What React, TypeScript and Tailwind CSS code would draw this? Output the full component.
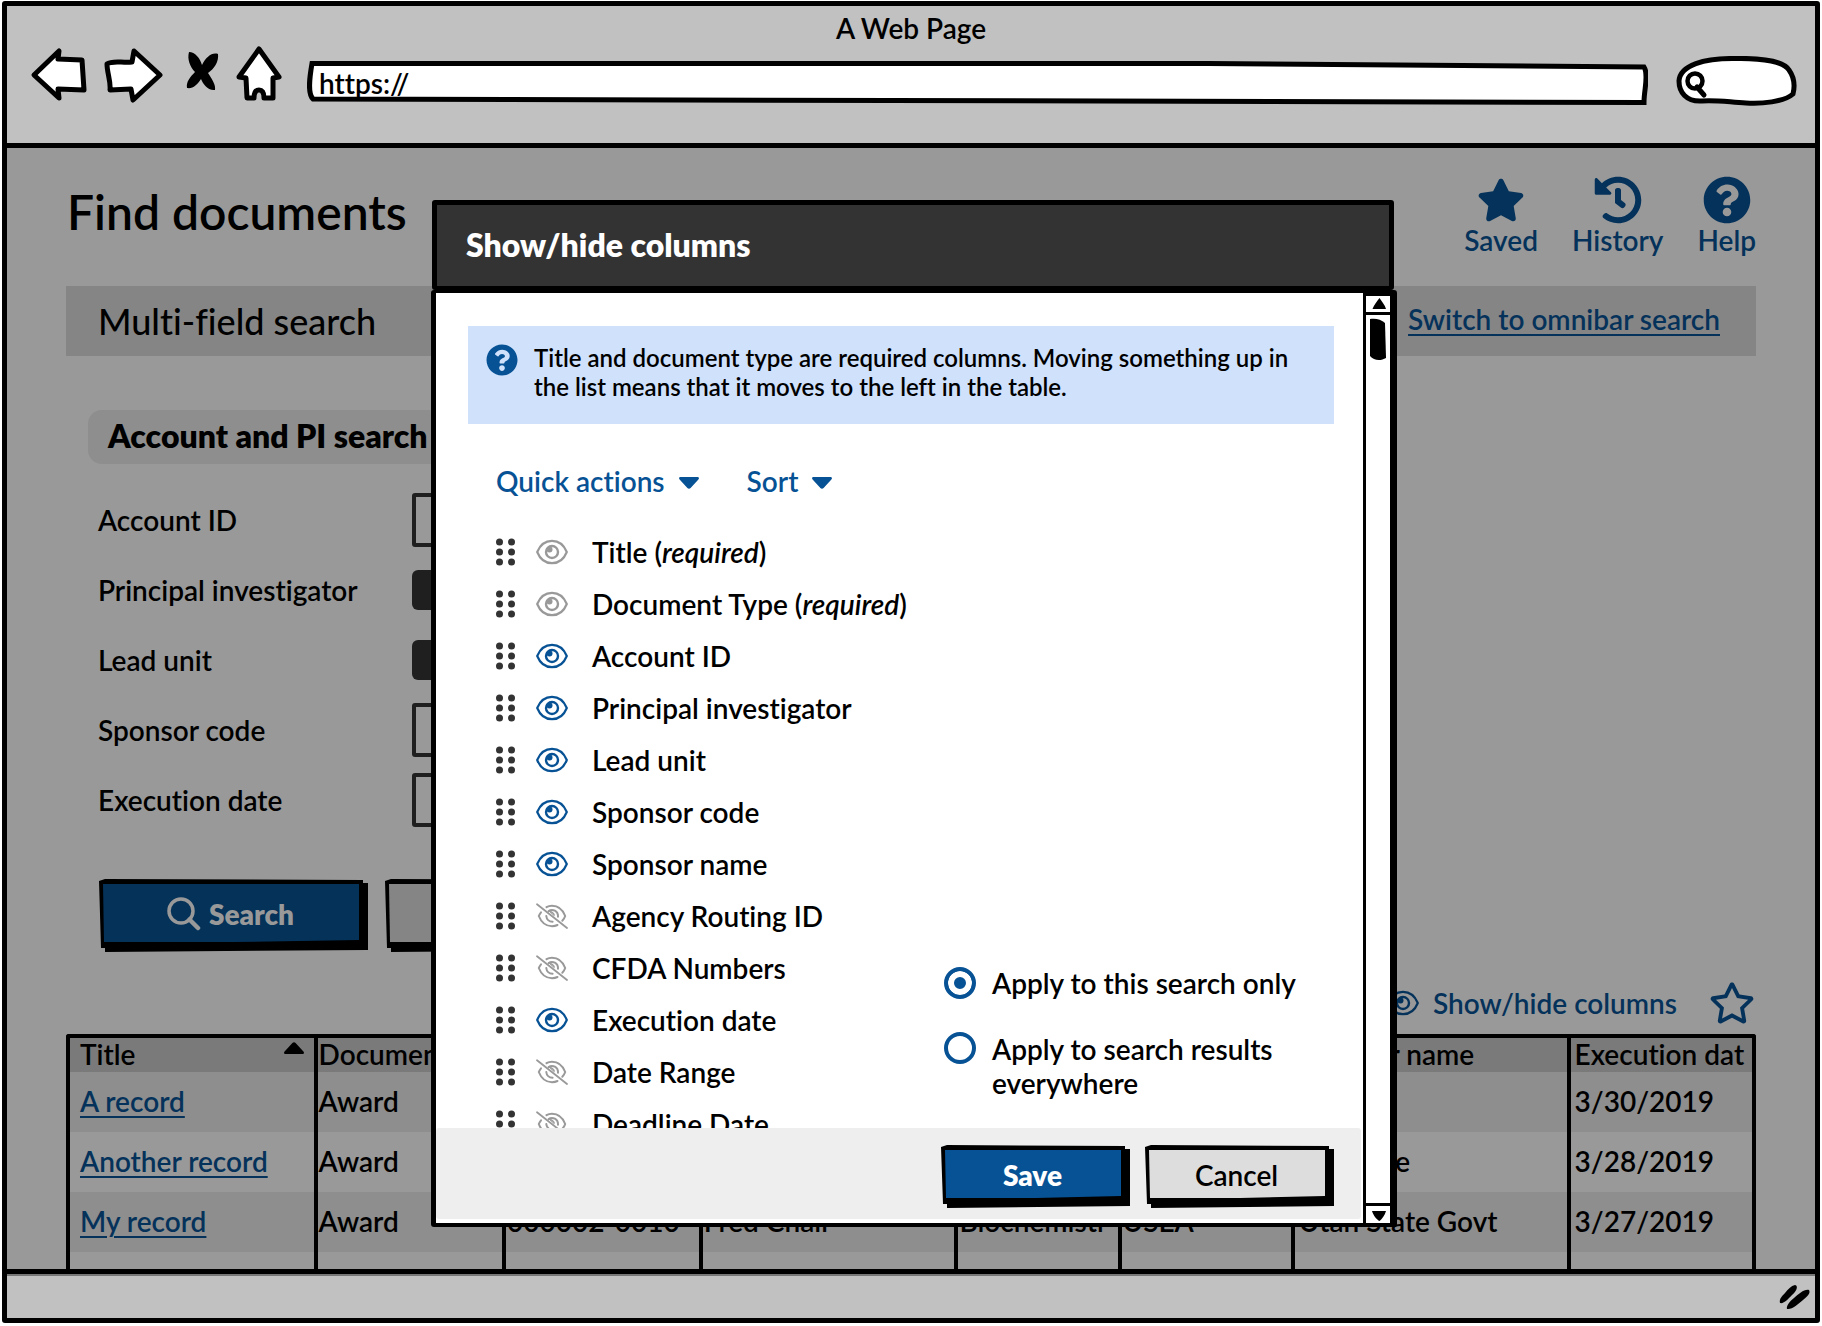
import type { ReactNode } from "react";
import { FaHistory, FaQuestionCircle, FaRegStar, FaStar } from "react-icons/fa";

type ColumnState = "locked" | "shown" | "hidden";

const COLUMNS: { name: string; required?: boolean; state: ColumnState }[] = [
  { name: "Title", required: true, state: "locked" },
  { name: "Document Type", required: true, state: "locked" },
  { name: "Account ID", state: "shown" },
  { name: "Principal investigator", state: "shown" },
  { name: "Lead unit", state: "shown" },
  { name: "Sponsor code", state: "shown" },
  { name: "Sponsor name", state: "shown" },
  { name: "Agency Routing ID", state: "hidden" },
  { name: "CFDA Numbers", state: "hidden" },
  { name: "Execution date", state: "shown" },
  { name: "Date Range", state: "hidden" },
  { name: "Deadline Date", state: "hidden" },
];

const FIELDS: { label: string; kind: "text" | "select" }[] = [
  { label: "Account ID", kind: "text" },
  { label: "Principal investigator", kind: "select" },
  { label: "Lead unit", kind: "select" },
  { label: "Sponsor code", kind: "text" },
  { label: "Execution date", kind: "text" },
];

const HEADERS = [
  "Title",
  "Document",
  "Account ID",
  "Investigator",
  "Lead unit",
  "Sponsor",
  "Sponsor name",
  "Execution dat",
];

const RECORDS = [
  ["A record", "Award", "", "", "", "", "", "3/30/2019"],
  ["Another record", "Award", "", "", "", "", "Air Force", "3/28/2019"],
  ["My record", "Award", "000002-0010", "Fred Chair", "Biochemistr", "USEA", "Utah State Govt", "3/27/2019"],
  ["", "", "", "", "", "", "", ""],
];

function Eye({ className = "" }: { className?: string }) {
  return (
    <svg viewBox="0 0 32 26" className={"h-[26px] w-8 shrink-0 " + className} fill="none" stroke="currentColor" aria-hidden="true">
      <path d="M1.2 13C4 6 9.500 1.800 16 1.800S28 6 30.800 13C28 20 22.500 24.200 16 24.200S4 20 1.200 13Z" strokeWidth="2.200" strokeLinejoin="round" />
      <circle cx="16" cy="13" r="6" strokeWidth="2.400" />
      <circle cx="13.500" cy="10.500" r="3" fill="currentColor" stroke="none" />
    </svg>
  );
}

function EyeOff({ className = "" }: { className?: string }) {
  return (
    <svg viewBox="0 0 32 26" className={"h-[26px] w-8 shrink-0 " + className} fill="none" stroke="currentColor" strokeLinecap="round" aria-hidden="true">
      <path d="M1 1.200 31 25" strokeWidth="1.800" />
      <path d="M10.500 4.200C12 3.300 14 2.800 16 2.800C22 2.800 26.800 6.800 29.200 13C28.600 14.800 27.600 16.400 26.300 17.800" strokeWidth="2" />
      <path d="M5 9.300C4 10.500 3.300 11.700 2.800 13C5.200 19.200 10 23.200 16 23.200C18 23.200 19.900 22.800 21.500 22" strokeWidth="2" />
      <path d="M12.600 8.100C16.500 5.300 22.300 8 22 13.800" strokeWidth="2" />
      <path d="M10.300 13C10.500 16.200 13 18.700 16.600 18.700" strokeWidth="2" />
      <path d="M14 8.500C16 8.300 18.500 10 18.300 12.300Z" fill="currentColor" strokeWidth="1" />
    </svg>
  );
}

function DragDots() {
  return (
    <svg viewBox="0 0 19 28" className="h-7 w-[19px] shrink-0" fill="#333" aria-hidden="true">
      {[4, 14, 24].map((y) => (
        <g key={y}>
          <circle cx="3.500" cy={y} r="3.500" />
          <circle cx="15.500" cy={y} r="3.500" />
        </g>
      ))}
    </svg>
  );
}

function CaretDown() {
  return (
    <svg viewBox="0 0 20 16" className="h-4 w-5" fill="currentColor" aria-hidden="true">
      <path d="M1.500 4H18.500C20 4 20.400 5.500 19.400 6.500L11.600 15C10.700 16 9.300 16 8.400 15L.6 6.500C-.4 5.500 0 4 1.500 4Z" />
    </svg>
  );
}

/** A push button with an uneven inked outline and a hard drop shadow. */
function SketchButton({ width, height, size, fill, children }: { width: number; height: number; size: string; fill: string; children: ReactNode }) {
  const w = width;
  const h = height;
  return (
    <button type="button" className={"relative shrink-0 pr-1.5 pb-1 text-[28px] leading-[34px] " + size}>
      <svg viewBox={`0 0 ${w} ${h}`} preserveAspectRatio="none" className="absolute inset-0 h-full w-full" aria-hidden="true">
        <polygon points={`0,2 6,0 ${w - 5},1 ${w - 5},4 ${w},4 ${w},${h - 2} 6,${h} 6,${h - 4} 2,${h - 4}`} fill="#000" />
        <polygon points={`4,5 ${w - 9},5 ${w - 9},${h - 12} ${w / 2},${h - 10} 5,${h - 10}`} fill={fill} />
      </svg>
      <span className="relative flex items-center justify-center gap-2">{children}</span>
    </button>
  );
}

function BrowserBar() {
  const icon = "shrink-0 fill-white stroke-black stroke-[5]";
  return (
    <header className="border-b-[5px] border-black bg-[#c1c1c1] pt-[5px] pb-10">
      <div className="text-center text-[28px] leading-[34px]">A Web Page</div>
      <div className="flex h-[58px] items-center pr-[18px] pl-[23px]">
        <button type="button" aria-label="Back">
          <svg viewBox="0 0 58 58" className={"h-[58px] w-[58px] " + icon} strokeLinejoin="round" aria-hidden="true">
            <path d="M4 30 29 6 28 14 52 15 54 45 28 44 29 53Z" />
          </svg>
        </button>
        <button type="button" aria-label="Forward" className="ml-[14px]">
          <svg viewBox="0 0 62 58" className={"h-[58px] w-[62px] " + icon} strokeLinejoin="round" aria-hidden="true">
            <path d="M5 19C10 15 20 18 30 17L32 6 58 30 31 55 29 44 8 45C9 36 5 28 5 19Z" />
          </svg>
        </button>
        <button type="button" aria-label="Stop" className="ml-5">
          <svg viewBox="0 0 38 58" className="h-[58px] w-[38px] shrink-0" aria-hidden="true">
            <path d="M5 7C11 7 16 13 18 20C22 12 28 7 34 9C35 17 30 24 24 28C28 34 32 40 31 45C24 46 19 39 17 34C13 40 9 44 3 43C2 37 6 32 11 27C6 22 3 14 5 7Z" />
          </svg>
        </button>
        <button type="button" aria-label="Home" className="ml-[13px]">
          <svg viewBox="0 0 48 58" className={"h-[58px] w-12 " + icon} strokeLinejoin="round" aria-hidden="true">
            <path d="M24 4 44 32 38 33 38 53 29 53C29 46 26 45 24 45S19 46 19 53L12 53 11 33 4 32Z" />
          </svg>
        </button>
        <label className="relative mt-[18px] ml-6 h-11 flex-1">
          <span className="sr-only">Address</span>
          <svg viewBox="0 0 1340 44" preserveAspectRatio="none" className="absolute inset-0 h-full w-full" aria-hidden="true">
            <path d="M5 2.500 900 2.500 1336 6C1341 14 1336 28 1336 41.500L6 38C0 32 3 14 5 2.500Z" fill="#fff" stroke="#000" strokeWidth="5" />
          </svg>
          <input type="text" defaultValue="https://" className="relative h-full w-full bg-transparent pl-3 text-[28px] outline-none" />
        </label>
        <label className="relative mt-[14px] ml-7 h-[50px] w-[121px] shrink-0">
          <span className="sr-only">Web search</span>
          <svg viewBox="0 0 121 50" className="absolute inset-0 h-full w-full" fill="none" stroke="#000" aria-hidden="true">
            <path d="M26 45C10 46 3 36 3 25C4 9 28 2 60 2.500C88 2 108 6 113 14C118 21 119 30 117 38C108 46 85 48 70 47C52 46 40 44 26 45Z" fill="#fff" strokeWidth="5" />
            <circle cx="19" cy="25" r="7.500" strokeWidth="4.500" />
            <path d="M21 31 28 39" strokeWidth="5" strokeLinecap="round" />
          </svg>
          <input type="text" className="relative h-full w-full bg-transparent pr-4 pl-9 text-[28px] outline-none" />
        </label>
      </div>
    </header>
  );
}

function PageContent() {
  const navLink = "flex flex-col items-center gap-0.5 text-[#05325a]";
  return (
    <main className="flex-1 overflow-hidden border-b-[5px] border-black bg-[#999] px-[59px]">
      <div className="flex h-[138px] items-start justify-between pt-7">
        <h1 className="mt-2 pl-px text-5xl leading-[56px]">Find documents</h1>
        <nav className="flex gap-[34px] leading-7">
          <a href="#saved" className={navLink}>
            <FaStar className="h-12 w-12" />
            Saved
          </a>
          <a href="#history" className={navLink}>
            <FaHistory className="h-12 w-12" />
            History
          </a>
          <a href="#help" className={navLink}>
            <FaQuestionCircle className="h-12 w-12" />
            Help
          </a>
        </nav>
      </div>

      <div className="flex h-[70px] items-center justify-between bg-[#858585] pr-9 pl-8">
        <h2 className="text-4xl font-medium">Multi-field search</h2>
        <a href="#omnibar" className="pb-1 text-[#05325a] underline decoration-2 underline-offset-4">
          Switch to omnibar search
        </a>
      </div>

      <form className="mt-[54px]">
        <h3 className="ml-[22px] flex h-[54px] w-[700px] items-center rounded-[14px] bg-[#8e8e8e] pb-0.5 pl-5 text-[32px] font-extrabold">
          Account and PI search
        </h3>
        <div className="mt-[21px] ml-8">
          {FIELDS.map((f) => (
            <label key={f.label} className="flex h-[70px] items-center">
              <span className="w-[314px]">{f.label}</span>
              {f.kind === "text" ? (
                <input type="text" className="h-[54px] w-[360px] rounded-[3px] border-4 border-[#1f1f1f] bg-transparent" />
              ) : (
                <select className="h-10 w-[360px] rounded-md bg-[#1f1f1f]" />
              )}
            </label>
          ))}
        </div>
        <div className="mt-11 ml-[33px] flex gap-[17px] text-[#999]">
          <SketchButton width={269} height={73} size="h-[73px] w-[269px]" fill="#053259">
            <svg viewBox="0 0 34 34" className="h-[34px] w-[34px]" fill="none" stroke="currentColor" strokeLinecap="round" aria-hidden="true">
              <circle cx="14" cy="14" r="12" strokeWidth="3.500" />
              <path d="M22.500 22.500 31 31" strokeWidth="4.500" />
            </svg>
            <span className="font-extrabold">Search</span>
          </SketchButton>
          <SketchButton width={269} height={73} size="h-[73px] w-[269px] text-black" fill="#858585">
            Clear
          </SketchButton>
        </div>
      </form>

      <div className="mt-6 mb-1 flex h-[54px] items-center justify-end pr-px text-[#05325a]">
        <button type="button" className="flex items-center gap-3.5">
          <Eye />
          Show/hide columns
        </button>
        <button type="button" aria-label="Save this search" className="ml-8">
          <FaRegStar className="h-11 w-[46px]" />
        </button>
      </div>

      <div className="h-[235px] overflow-hidden rounded-t-[3px] border-4 border-b-0 border-black">
        <table className="w-full table-fixed border-collapse whitespace-nowrap">
          <colgroup>
            <col className="w-[14.600%]" />
            <col className="w-[11.200%]" />
            <col className="w-[11.700%]" />
            <col className="w-[15.200%]" />
            <col className="w-[9.700%]" />
            <col className="w-[10.300%]" />
            <col className="w-[16.400%]" />
            <col />
          </colgroup>
          <thead>
            <tr className="h-[34px] bg-[#7a7a7a] leading-8">
              {HEADERS.map((h, i) => (
                <th
                  key={h}
                  scope="col"
                  className="border-r-4 border-black p-0 pb-0.5 pl-px text-left font-semibold first:pl-2.5 last:border-r-0 nth-[n+7]:pl-1"
                >
                  <span className="flex justify-between">
                    {h}
                    {i === 0 && (
                      <svg viewBox="0 0 20 12" className="mt-1 mr-2.5 h-3 w-5" aria-label="Sorted ascending">
                        <path d="M1.500 12H18.500C20 12 20.400 10.500 19.400 9.500L11.600 1C10.700 0 9.300 0 8.400 1L.6 9.500C-.4 10.500 0 12 1.500 12Z" />
                      </svg>
                    )}
                  </span>
                </th>
              ))}
            </tr>
          </thead>
          <tbody>
            {RECORDS.map((r, n) => (
              <tr key={n} className="h-[60px] odd:bg-[#8e8e8e]">
                {r.map((cell, i) => (
                  <td key={i} className="border-r-4 border-black p-0 pb-0.5 pl-px first:pl-2.5 last:border-r-0 nth-[n+7]:pl-1">
                    {i === 0 && cell ? (
                      <a href="#record" className="text-[#05325a] underline decoration-2 underline-offset-4">
                        {cell}
                      </a>
                    ) : (
                      cell
                    )}
                  </td>
                ))}
              </tr>
            ))}
          </tbody>
        </table>
      </div>
    </main>
  );
}

function ColumnsDialog() {
  return (
    <div role="dialog" aria-labelledby="dialog-title" className="w-[966px] max-w-full">
      <div className="mr-[3px] ml-px flex h-[90px] items-center rounded-[3px] border-[5px] border-b-4 border-black bg-[#333] pl-[29px]">
        <h2 id="dialog-title" className="pb-0.5 text-[32px] font-extrabold text-white">
          Show/hide columns
        </h2>
      </div>
      <div className="flex rounded-[3px] border-t-[3px] border-r-[7px] border-b-4 border-l-[5px] border-black bg-white">
        <div className="min-w-0 flex-1">
          <div className="pt-[33px]">
            <div className="mr-[29px] ml-8 flex h-[98px] gap-4 bg-[#cfe1fb] pl-[18px]">
              <FaQuestionCircle className="mt-[18px] h-8 w-8 shrink-0 text-[#075295]" />
              <p className="pt-[17px] text-2xl leading-[29px]">
                Title and document type are required columns. Moving something up in
                <br />
                the list means that it moves to the left in the table.
              </p>
            </div>

            <div className="mt-10 ml-[60px] flex gap-12 text-[#075295]">
              <button type="button" className="flex items-center gap-3.5">
                Quick actions
                <CaretDown />
              </button>
              <button type="button" className="flex items-center gap-3.5">
                Sort
                <CaretDown />
              </button>
            </div>

            <div className="mt-7 ml-[60px] flex h-[602px] justify-between overflow-hidden">
              <ul>
                {COLUMNS.map((c) => (
                  <li key={c.name} className="flex h-[52px] items-center">
                    <DragDots />
                    <button type="button" aria-label={"Toggle " + c.name} className="mr-5 ml-[21px]">
                      {c.state === "hidden" ? <EyeOff className="text-[#999]" /> : <Eye className={c.state === "locked" ? "text-[#999]" : "text-[#075295]"} />}
                    </button>
                    <span className="pl-1">
                      {c.name}
                      {c.required && (
                        <>
                          {" "}
                          (<em>required</em>)
                        </>
                      )}
                    </span>
                  </li>
                ))}
              </ul>
              <fieldset className="mr-[61px] flex w-[358px] flex-col gap-8 self-end pb-7">
                <legend className="sr-only">Where to apply</legend>
                <label className="flex items-center gap-4">
                  <input
                    type="radio"
                    name="scope"
                    defaultChecked
                    className="h-8 w-8 shrink-0 appearance-none rounded-full border-4 border-[#075295] bg-white checked:bg-[#075295] checked:shadow-[inset_0_0_0_6px_white]"
                  />
                  Apply to this search only
                </label>
                <label className="flex items-start gap-4">
                  <input
                    type="radio"
                    name="scope"
                    className="h-8 w-8 shrink-0 appearance-none rounded-full border-4 border-[#075295] bg-white checked:bg-[#075295] checked:shadow-[inset_0_0_0_6px_white]"
                  />
                  Apply to search results everywhere
                </label>
              </fieldset>
            </div>
          </div>

          <div className="mr-0.5 mb-1 flex h-[91px] justify-end gap-[15px] rounded-[3px] bg-[#eee] pt-[17px] pr-[27px]">
            <SketchButton width={189} height={63} size="h-[63px] w-[189px] text-white" fill="#075295">
              <span className="font-extrabold">Save</span>
            </SketchButton>
            <SketchButton width={189} height={63} size="h-[63px] w-[189px]" fill="#ddd">
              Cancel
            </SketchButton>
          </div>
        </div>

        <div className="flex w-[27px] shrink-0 flex-col border-l-[3px] border-black" aria-hidden="true">
          <svg viewBox="0 0 24 22" className="h-[22px] w-6">
            <path d="M0 0H24V3H0ZM0 19H24V22H0Z" />
            <path d="M13.500 5C15.500 8 19 12 20 16H6.500C8 12 11 8 13.500 5Z" />
          </svg>
          <svg viewBox="0 0 24 48" className="h-12 w-6">
            <path d="M4 4C9 3 15 4 19 8L20 43C15 46 8 46 4 41Z" />
          </svg>
          <svg viewBox="0 0 24 20" className="mt-auto h-5 w-6">
            <path d="M0 0H24V3H0ZM6 8H20C19 12 16 16 13.500 18C11 17 7 12 6 8Z" />
          </svg>
        </div>
      </div>
    </div>
  );
}

export default function App() {
  return (
    <div className="relative flex min-h-screen flex-col bg-white px-0.5 pt-px pb-[3px] font-['Lato',sans-serif] text-[28px] leading-[34px] font-semibold text-black [font-variant-ligatures:none]">
      <div className="flex flex-1 flex-col overflow-hidden rounded-[3px] border-[5px] border-black">
        <BrowserBar />
        <PageContent />
        <footer className="flex h-11 items-center justify-end border-t-2 border-[#777] bg-[#c1c1c1] pr-1">
          <svg viewBox="0 0 32 26" className="h-[26px] w-8" aria-hidden="true">
            <path d="M16 1C20 2 17 8 13 11C9 15 5 20 1 19C0 15 3 12 6 9C9 5 12 2 16 1ZM30 6C32 9 28 13 24 16C19 20 13 26 8 25C7 22 11 17 15 14C20 10 25 5 30 6Z" />
          </svg>
        </footer>
      </div>
      <div className="absolute inset-x-0 top-[200px] flex justify-center pl-1.5">
        <ColumnsDialog />
      </div>
    </div>
  );
}
